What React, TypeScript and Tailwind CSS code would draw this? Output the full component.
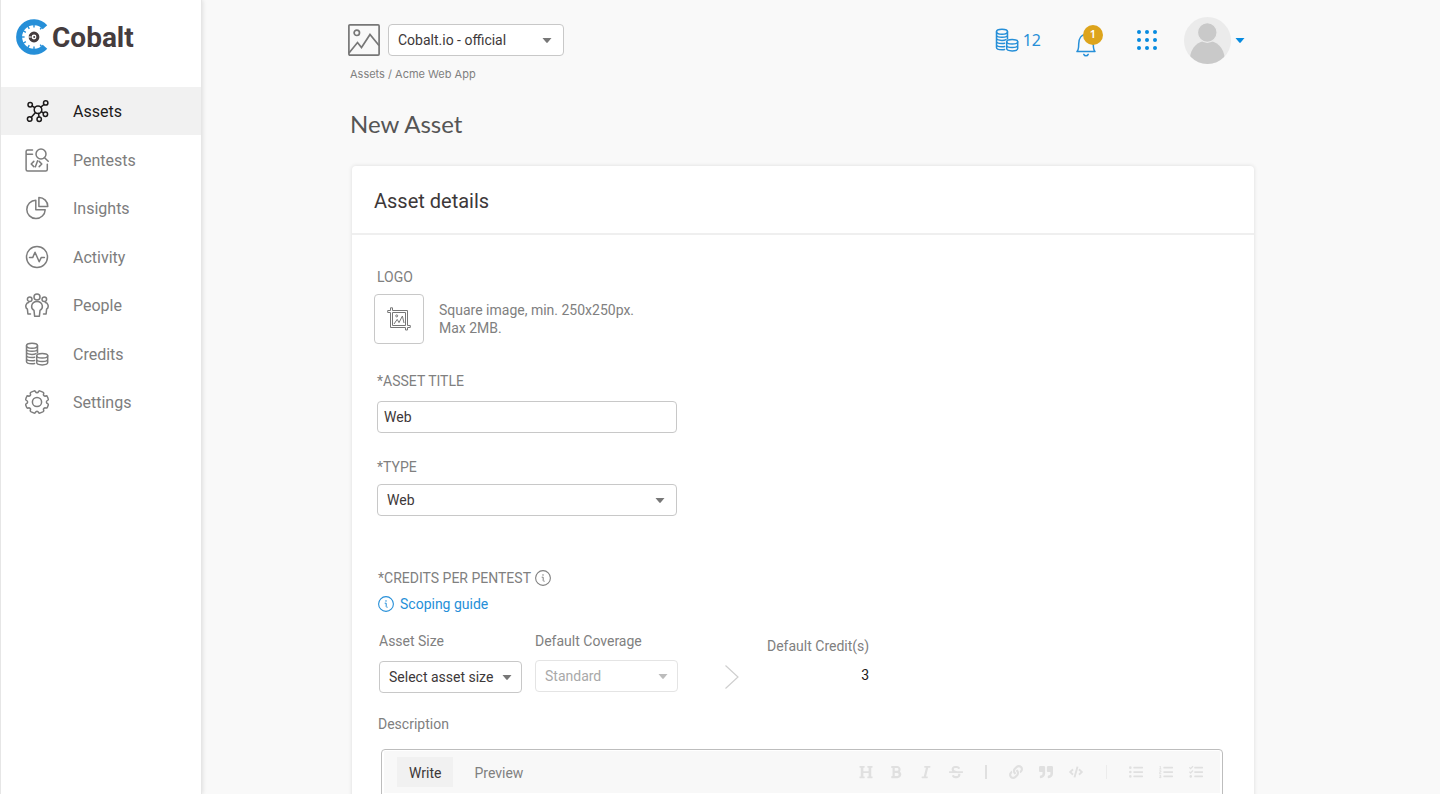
import { useState } from "react";
import type { ReactNode } from "react";
import {
  FaBold,
  FaCode,
  FaHeading,
  FaItalic,
  FaLink,
  FaListOl,
  FaListUl,
  FaQuoteRight,
  FaStrikethrough,
  FaTasks,
} from "react-icons/fa";

const SPOKES = [0, 30, 60, 90, 120, 150, 180];

function LogoMark() {
  return (
    <svg viewBox="0 0 34 36" className="h-9 w-[34px]" fill="none" aria-hidden="true">
      <path d="M29 8.2A14.8 14.8 0 1 0 29 27.8" stroke="#268fd8" strokeWidth="6" />
      <g stroke="#268fd8" strokeWidth="1.400">
        {SPOKES.map((a) => (
          <path key={a} d="M18 3.500V8.600" transform={`rotate(${-a} 18 18)`} />
        ))}
        <path d="m25.500 8.500-1.300 1.900M25.500 27.500l-1.300-1.900" />
      </g>
      <circle cx="18" cy="18" r="3.900" stroke="#453c3e" strokeWidth="3" />
      <path d="M12.200 18h3.200" stroke="#fff" strokeWidth="1" />
      <circle cx="18.200" cy="18" r="1" fill="#453c3e" />
    </svg>
  );
}

function Icon({ children, className = "size-6" }: { children: ReactNode; className?: string }) {
  return (
    <svg
      viewBox="0 0 24 24"
      className={className}
      fill="none"
      stroke="currentColor"
      strokeWidth="1.500"
      strokeLinecap="round"
      strokeLinejoin="round"
      aria-hidden="true"
    >
      {children}
    </svg>
  );
}

const AssetsIcon = () => (
  <Icon>
    <circle cx="13" cy="10.700" r="3.800" />
    <circle cx="5.200" cy="5.800" r="2.200" />
    <circle cx="20.700" cy="3.900" r="2.200" />
    <circle cx="4.700" cy="20" r="2.300" />
    <circle cx="14.200" cy="20.200" r="2.200" />
    <circle cx="20.400" cy="15.300" r="2.200" />
    <path d="M7.100 7 9.800 8.700M19 5.500l-3.200 2.600M6.300 18.300l4.200-4.700M13.600 14.600l.400 3.300M16.300 12.700l2.200 1.300" />
  </Icon>
);

const PentestsIcon = () => (
  <Icon>
    <path d="M7.500 1.900H2.700C1.700 1.900 1.100 2.500 1.100 3.400v18c0 .9.600 1.500 1.600 1.500h18c1 0 1.600-.6 1.600-1.500v-5.200M1.300 6.200h6.200" />
    <circle cx="16" cy="6" r="5" />
    <path d="m19.600 9.700 3.600 3.600M8.800 13.400 6.200 16l2.600 2.600M14.200 13.400l2.600 2.600-2.600 2.600M12.600 12.800l-2.200 6" />
  </Icon>
);

const InsightsIcon = () => (
  <Icon>
    <path d="M10.800 4.200A9.200 9.200 0 1 0 20.200 13.700h-9.400Z" />
    <path d="M13.900 1.500v9h8.900a8.900 8.900 0 0 0-8.900-9Z" />
  </Icon>
);

const ActivityIcon = () => (
  <Icon>
    <circle cx="12" cy="12" r="10.500" />
    <path d="M4.500 12.600h3.200l2.300-5.400 4.200 9.600 2-4.200h3.200" />
  </Icon>
);

const PeopleIcon = () => (
  <Icon>
    <circle cx="12" cy="3.900" r="3" />
    <circle cx="4.700" cy="6.200" r="2.300" />
    <circle cx="19.300" cy="6.200" r="2.300" />
    <path d="M9.600 23.200 9 17.400c-1.800-1-2.700-2.600-2.300-4.800.500-2.600 2.400-4.200 5.300-4.200s4.800 1.600 5.300 4.200c.400 2.200-.5 3.800-2.300 4.800l-.6 5.800Z" />
    <path d="M5.500 21H2.900L2.400 16.200C.900 15.200.500 13.800 1 12c.500-1.500 1.500-2.400 2.700-2.500M18.500 21h2.600l.500-4.800c1.500-1 1.900-2.400 1.400-4.200-.5-1.500-1.500-2.400-2.700-2.500" />
  </Icon>
);

const CoinsIcon = ({ className }: { className?: string }) => (
  <Icon className={className}>
    <ellipse cx="7" cy="3.700" rx="5.500" ry="2.500" />
    <path d="M1.500 3.700v15.800c0 1.300 2.500 2.300 5.500 2.300 1 0 1.800-.1 2.600-.3M12.500 3.700v7M1.500 7c0 1.300 2.500 2.300 5.500 2.300s5.500-1 5.500-2.300M1.500 10.100c0 1.300 2.500 2.300 5.500 2.300 1.800 0 3-.3 4-.8M1.500 13.300c0 1.300 2.500 2.300 5.500 2.300 1 0 1.800-.1 2.600-.3M1.500 16.400c0 1.300 2.500 2.300 5.500 2.300 1 0 1.800-.1 2.600-.3" />
    <ellipse cx="17.200" cy="13.700" rx="5.500" ry="2.300" />
    <path d="M11.700 13.700v6.900c0 1.300 2.500 2.300 5.500 2.300s5.500-1 5.500-2.300v-6.900M11.700 17.200c0 1.300 2.500 2.300 5.500 2.300s5.500-1 5.500-2.300" />
  </Icon>
);

const SettingsIcon = () => (
  <Icon>
    <circle cx="12" cy="12" r="4.600" />
    <path d="M8.600 1.100c.8-.4 1.500-.3 1.900.5.300.7.800 1.100 1.500 1.100s1.200-.4 1.500-1.100c.4-.8 1.100-.9 1.900-.5l2.400 1c.9.400 1.100 1 .8 1.800-.3.800-.2 1.400.3 1.800s1 .6 1.800.3c.8-.3 1.400 0 1.700.8l.7 1.700c.4.900.2 1.600-.5 1.900-.8.300-1.200.9-1.200 1.600s.4 1.300 1.200 1.600c.7.300.9 1 .5 1.900l-.7 1.700c-.3.800-.9 1.100-1.700.8-.8-.3-1.300-.1-1.800.3s-.6 1-.3 1.800c.3.800.1 1.400-.8 1.800l-2.400 1c-.8.400-1.500.3-1.900-.5-.3-.7-.8-1.100-1.500-1.100s-1.200.4-1.500 1.100c-.4.800-1.100.9-1.900.5l-2.400-1c-.9-.4-1.100-1-.8-1.800.3-.8.2-1.400-.3-1.800s-1-.6-1.800-.3c-.8.300-1.400 0-1.700-.8l-.7-1.700c-.4-.9-.2-1.600.5-1.900.8-.3 1.200-.9 1.200-1.600s-.4-1.300-1.200-1.600c-.7-.3-.9-1-.5-1.900l.7-1.700c.3-.8.900-1.100 1.700-.8.800.3 1.300.1 1.800-.3s.6-1 .3-1.800c-.3-.8-.1-1.400.8-1.800Z" />
  </Icon>
);

function BellIcon() {
  return (
    <svg viewBox="0 0 20 26" className="h-[26px] w-5" fill="none" stroke="#268fd8" strokeWidth="1.500" strokeLinecap="round" strokeLinejoin="round" aria-hidden="true">
      <path d="M1 20.600h18c-1.500-1.500-1.700-4.100-1.700-7.600 0-5.600-2.700-9.600-7.300-9.600S2.700 7.400 2.700 13c0 3.500-.2 6.100-1.700 7.600Z" />
      <path d="M7.800 23.400c.4.900 1.200 1.400 2.200 1.400s1.800-.5 2.200-1.400" />
    </svg>
  );
}

function InfoIcon({ className = "" }: { className?: string }) {
  return (
    <svg viewBox="0 0 16 16" className={`size-4 ${className}`} fill="none" stroke="currentColor" aria-hidden="true">
      <circle cx="8" cy="8" r="7.400" strokeWidth="1.100" />
      <path d="M6.700 7.200h1.500v3.200c0 .7.400 1 1.400.8" strokeWidth="1" />
      <circle cx="8" cy="4.900" r=".5" fill="currentColor" strokeWidth=".4" />
    </svg>
  );
}

function Caret({ className = "" }: { className?: string }) {
  return (
    <svg viewBox="0 0 10 5" className={`h-[5px] w-[10px] ${className}`} fill="currentColor" aria-hidden="true">
      <path d="M.5 0h9L5.700 4.600a1 1 0 0 1-1.400 0Z" />
    </svg>
  );
}

function Select({
  id,
  label,
  options,
  className,
  disabled,
  compact,
}: {
  id: string;
  label?: string;
  options: string[];
  className: string;
  disabled?: boolean;
  compact?: boolean;
}) {
  return (
    <div className={`relative flex items-center ${className}`}>
      <select
        id={id}
        aria-label={label}
        disabled={disabled}
        className="h-8 w-full appearance-none rounded border border-[#c8c8c8] bg-white pr-6 pl-[9px] text-sm text-[#3d3839] disabled:border-[#e4e4e4] disabled:text-[#a9a9a9] disabled:opacity-100"
      >
        {options.map((o) => (
          <option key={o}>{o}</option>
        ))}
      </select>
      <Caret
        className={`pointer-events-none absolute ${compact ? "right-[10px]" : "right-3"} ${disabled ? "text-[#bcbcbc]" : "text-[#777]"}`}
      />
    </div>
  );
}

const NAV = [
  { name: "Assets", icon: <AssetsIcon /> },
  { name: "Pentests", icon: <PentestsIcon /> },
  { name: "Insights", icon: <InsightsIcon /> },
  { name: "Activity", icon: <ActivityIcon /> },
  { name: "People", icon: <PeopleIcon /> },
  { name: "Credits", icon: <CoinsIcon /> },
  { name: "Settings", icon: <SettingsIcon /> },
];

function Sidebar() {
  return (
    <aside className="z-10 w-[202px] shrink-0 border-x border-[#e6e6e6] bg-white shadow-[1px_0_4px_rgba(0,0,0,0.1)]">
      <a href="#home" className="flex h-[87px] items-start gap-0.5 pt-[19px] pl-[15px]">
        <LogoMark />
        <span className="text-[28px] leading-[38px] font-bold text-[#453c3e]">Cobalt</span>
      </a>
      <nav className="flex h-[339px] flex-col justify-between">
        {NAV.map(({ name, icon }, i) => (
          <a
            key={name}
            href={`#${name.toLowerCase()}`}
            aria-current={i === 0 ? "page" : undefined}
            className={`flex h-12 items-center gap-6 pl-6 text-base ${i === 0 ? "bg-[#f1f1f1] text-[#1c1a1a]" : "text-[#7d7d7d]"}`}
          >
            {icon}
            <span className="pt-0.5">{name}</span>
          </a>
        ))}
      </nav>
    </aside>
  );
}

function Header() {
  return (
    <header className="flex items-start justify-between pr-[9px]">
      <div className="flex items-center gap-2 pt-6">
        <svg viewBox="0 0 32 32" className="-ml-0.5 size-8" fill="none" stroke="#777" strokeWidth="1.700" aria-hidden="true">
          <rect x=".9" y=".9" width="30.200" height="30.200" rx="1" />
          <circle cx="8.800" cy="8.800" r="2.700" />
          <path d="m1 29 8.500-10.500 4 5L22 10.500l9 11" />
        </svg>
        <Select id="org" label="Organization" options={["Cobalt.io - official"]} className="w-44" />
      </div>
      <div className="flex items-center pt-[17px] text-[#268fd8]">
        <a href="#credits" className="flex items-center gap-1 pb-0.5 font-['Noto_Sans',sans-serif] text-base">
          <CoinsIcon className="size-6" />
          12
        </a>
        <button type="button" aria-label="Notifications" className="relative ml-[35px] pt-1.5">
          <BellIcon />
          <span className="absolute top-0 left-[7px] flex size-5 items-center justify-center rounded-full bg-[#dda41c] font-['Noto_Sans',sans-serif] text-[11px] font-semibold text-white">
            1
          </span>
        </button>
        <button type="button" aria-label="Apps" className="ml-[41px] pb-0.5">
          <svg viewBox="0 0 20 20" className="size-5" fill="#078be0" aria-hidden="true">
            {[2, 10, 18].map((y) => [2, 10, 18].map((x) => <circle key={`${x}-${y}`} cx={x} cy={y} r="2" />))}
          </svg>
        </button>
        <button type="button" aria-label="Account" className="ml-[27px] flex items-center gap-1">
          <svg viewBox="0 0 47 47" className="size-[47px]" aria-hidden="true">
            <clipPath id="avatar">
              <circle cx="23.500" cy="23.500" r="23.500" />
            </clipPath>
            <g clipPath="url(#avatar)">
              <path fill="#ebebeb" d="M0 0h47v47H0z" />
              <circle cx="23.300" cy="41" r="17.200" fill="#c9c9c9" />
              <circle cx="23.300" cy="15.500" r="9.800" fill="#c9c9c9" stroke="#ebebeb" strokeWidth="1.200" />
            </g>
          </svg>
          <Caret className="text-[#078be0]" />
        </button>
      </div>
    </header>
  );
}

const TOOLS = [
  [
    { name: "Heading", icon: <FaHeading /> },
    { name: "Bold", icon: <FaBold /> },
    { name: "Italic", icon: <FaItalic /> },
    { name: "Strikethrough", icon: <FaStrikethrough /> },
  ],
  [
    { name: "Link", icon: <FaLink /> },
    { name: "Quote", icon: <FaQuoteRight /> },
    { name: "Code", icon: <FaCode /> },
  ],
  [
    { name: "Bulleted list", icon: <FaListUl /> },
    { name: "Numbered list", icon: <FaListOl /> },
    { name: "Task list", icon: <FaTasks /> },
  ],
];

function Editor() {
  const [tab, setTab] = useState("Write");
  return (
    <div className="mt-[15px] mr-[31px] ml-[7px] rounded border border-[#bdbdbd] px-0.5 pt-px">
      <div className="flex items-center justify-between bg-[#f8f8f8] pt-1.5 pr-[9px] pb-1.5 pl-[13px] text-sm">
        <div className="flex gap-[9px]">
          {["Write", "Preview"].map((t) => (
            <button
              key={t}
              type="button"
              onClick={() => setTab(t)}
              className={`h-[30px] px-3 pt-0.5 ${t === tab ? "bg-[#f1f1f1] text-[#3d3839]" : "text-[#808080]"}`}
            >
              {t}
            </button>
          ))}
        </div>
        <div className="flex items-center text-[14px] text-[#e0e0e0]">
          {TOOLS.map((group, i) => (
            <div key={i} className="flex items-center">
              {i > 0 && (
                <div className="flex w-[30px] justify-center">
                  <div className={`h-[14px] ${i === 1 ? "w-0.5 bg-[#e0e0e0]" : "w-px bg-[#ececec]"}`} />
                </div>
              )}
              {group.map(({ name, icon }) => (
                <button key={name} type="button" aria-label={name} className="flex w-[30px] justify-center">
                  {icon}
                </button>
              ))}
            </div>
          ))}
        </div>
      </div>
      <textarea id="description" className="block h-40 w-full resize-none p-3 text-sm text-[#3d3839] outline-none" />
    </div>
  );
}

function AssetForm() {
  return (
    <section className="mt-[26px] ml-0.5 rounded bg-white shadow-[0_0_4px_rgba(0,0,0,0.12)]">
      <h2 className="flex h-[69px] items-center border-b-2 border-[#efefef] pt-0.5 pl-[22px] text-xl text-[#3d3839]">Asset details</h2>
      <form className="flex flex-col pt-8 pb-8 pl-[22px] text-sm text-[#808080]">
        <div>
          <label htmlFor="logo" className="pl-[3px]">
            LOGO
          </label>
          <div className="mt-[7px] flex items-center gap-[15px]">
            <button id="logo" type="button" className="flex size-[50px] items-center justify-center rounded border border-[#c8c8c8]">
              <svg viewBox="0 0 24 24" className="size-6" fill="none" stroke="#777" strokeWidth="1" strokeLinejoin="round" aria-hidden="true">
                <path d="M3.500 3.500H.700v2h2.800v15h15V23h2v-2.500h2.800v-2h-2.800v-15h-15V.800h-2Z" />
                <path d="M5.500 5.500h13v13h-13Z" />
                <circle cx="9.700" cy="8.900" r="1" />
                <path d="m7 17 3.200-4.600 1.800 3.200 3.400-6.600L17 16" />
              </svg>
            </button>
            <p className="leading-[18px]">
              Square image, min. 250x250px.
              <br />
              Max 2MB.
            </p>
          </div>
        </div>
        <div className="mt-[27px] flex flex-col pl-[3px]">
          <label htmlFor="title">*ASSET TITLE</label>
          <input
            id="title"
            defaultValue="Web"
            className="mt-[10px] h-8 w-[300px] rounded border border-[#c8c8c8] px-1.5 text-[#3d3839]"
          />
        </div>
        <div className="mt-6 flex flex-col gap-[7px] pl-[3px]">
          <label htmlFor="type">*TYPE</label>
          <Select id="type" options={["Web", "Mobile", "API"]} className="w-[300px]" />
        </div>
        <div className="mt-[52px] flex items-center gap-1 pl-1">
          *CREDITS PER PENTEST
          <InfoIcon />
        </div>
        <a href="#scoping" className="mt-1.5 flex items-center gap-1.5 pl-1 text-[#268fd8]">
          <InfoIcon />
          Scoping guide
        </a>
        <div className="mt-[17px] flex items-start pl-[5px]">
          <div className="flex flex-col gap-[10px]">
            <label htmlFor="size">Asset Size</label>
            <Select id="size" options={["Select asset size", "Small", "Medium", "Large"]} className="w-[143px]" compact />
          </div>
          <div className="ml-[13px] flex flex-col gap-[9px]">
            <label htmlFor="coverage">Default Coverage</label>
            <Select id="coverage" options={["Standard"]} className="w-[143px]" compact disabled />
          </div>
          <svg viewBox="0 0 14 24" className="mt-[34px] ml-[47px] h-6 w-[14px]" fill="none" stroke="#cfcfcf" strokeWidth="1.200" aria-hidden="true">
            <path d="m.5.500 12.500 11.500L.500 23.500" />
          </svg>
          <div className="mt-[5px] ml-7 flex flex-col gap-[9px] text-right">
            <span>Default Credit(s)</span>
            <output className="text-[#1c1a1a]">3</output>
          </div>
        </div>
        <label htmlFor="description" className="mt-[21px] pl-1">
          Description
        </label>
        <Editor />
      </form>
    </section>
  );
}

export default function App() {
  return (
    <div className="flex h-screen bg-[#f9f9f9] font-[Roboto,'Liberation_Sans',sans-serif]">
      <Sidebar />
      <main className="flex-1 overflow-y-auto pr-[186px] pb-8 pl-[148px] [scrollbar-width:none]">
        <Header />
        <p className="mt-0.5 font-[Inter,sans-serif] text-[11px] leading-4 text-[#808080]">
          <a href="#assets">Assets</a> / Acme Web App
        </p>
        <h1 className="mt-[26px] font-[Lato,sans-serif] text-2xl text-[#555]">New Asset</h1>
        <AssetForm />
      </main>
    </div>
  );
}
